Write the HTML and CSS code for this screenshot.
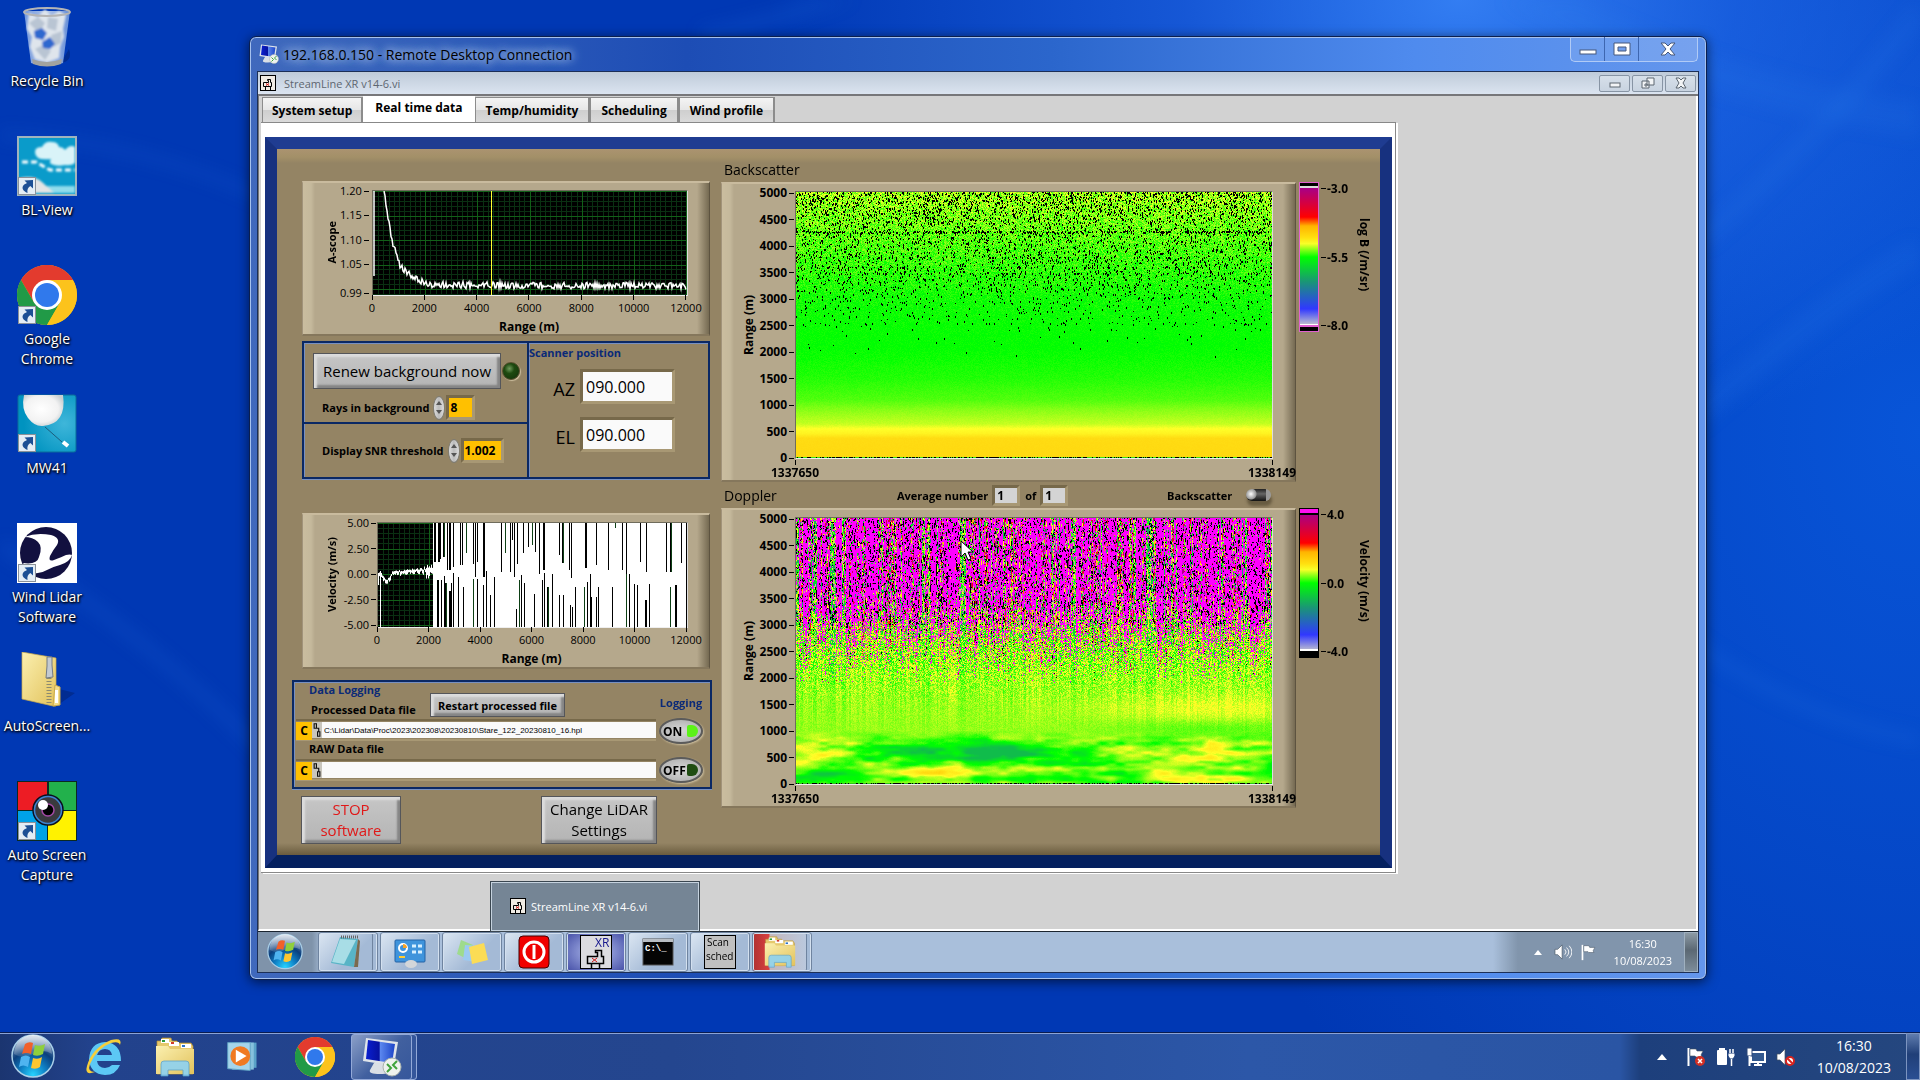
FILE: index.html
```
<!DOCTYPE html>
<html lang="en">
<head>
    <meta charset="UTF-8">
    <meta name="viewport" content="width=device-width, initial-scale=1.0">
    <title>192.168.0.150 - Remote Desktop Connection</title>
    <link rel="stylesheet" href="styles.css">
</head>
<body>
    <!-- Shared icons -->
    <svg class="defs" width="0" height="0">
        <defs>
            <radialGradient id="orbBlue" cx="50%" cy="95%" r="90%">
                <stop offset="0" stop-color="#27d3ff"/><stop offset=".35" stop-color="#0e7fc4"/><stop offset=".65" stop-color="#0b3f7d"/><stop offset="1" stop-color="#7b96b8"/>
            </radialGradient>
            <linearGradient id="gloss" x1="0" y1="0" x2="0" y2="1">
                <stop offset="0" stop-color="#fff" stop-opacity=".75"/><stop offset="1" stop-color="#fff" stop-opacity=".1"/>
            </linearGradient>
            <linearGradient id="folder" x1="0" y1="0" x2="1" y2="1">
                <stop offset="0" stop-color="#fbf0b0"/><stop offset="1" stop-color="#e2c25c"/>
            </linearGradient>
            <linearGradient id="screen" x1="0" y1="0" x2="1" y2="0">
                <stop offset="0" stop-color="#0a1fd0"/><stop offset=".45" stop-color="#0712a0"/><stop offset=".5" stop-color="#5a86ee"/><stop offset="1" stop-color="#1c44c8"/>
            </linearGradient>
            <linearGradient id="bin" x1="0" y1="0" x2="1" y2="0">
                <stop offset="0" stop-color="#8fb0e8"/><stop offset=".5" stop-color="#dde7f4"/><stop offset="1" stop-color="#7aa0e0"/>
            </linearGradient>
            <radialGradient id="balloon" cx="45%" cy="45%" r="60%">
                <stop offset="0" stop-color="#fff"/><stop offset=".7" stop-color="#f2f2f2"/><stop offset="1" stop-color="#c9cfd2"/>
            </radialGradient>
            <radialGradient id="sky" cx="80%" cy="50%" r="70%">
                <stop offset="0" stop-color="#3fb6da"/><stop offset="1" stop-color="#0093c0"/>
            </radialGradient>
            <filter id="soft"><feGaussianBlur stdDeviation=".8"/></filter>
        </defs>
        <symbol id="shortcut" viewBox="0 0 18 18">
            <rect x=".5" y=".5" width="17" height="17" fill="#e4edf5" stroke="#8b9199"/>
            <path d="M6.500 3.500 15 3v8.500l-2.700-2.400C10 10.500 9 12.500 9.500 16 5 14 3.500 11 5.300 8.500 6.500 7 8 6.700 9 6z" fill="#1d4f94"/>
        </symbol>
        <symbol id="chrome" viewBox="0 0 60 60">
            <circle cx="30" cy="30" r="30" fill="#fbc116"/>
            <path d="M4 15A30 30 0 0 1 56 15H30L17 37.500z" fill="#e33b2e"/>
            <path d="M4 15A30 30 0 0 0 30 60L43 37.500H17z" fill="#219a47"/>
            <path d="M30 15H56A30 30 0 0 1 30 60L43 37.500z" fill="#fcc31c"/>
            <circle cx="30" cy="30" r="15" fill="#fff"/><circle cx="30" cy="30" r="12" fill="#3079ec"/>
        </symbol>
        <symbol id="orb" viewBox="0 0 44 44">
            <circle cx="22" cy="22" r="21" fill="url(#orbBlue)" stroke="#a9cfe8" stroke-width="1.500"/>
            <path d="M3 20A19 19 0 0 1 41 20Q32 14 22 20T3 20z" fill="url(#gloss)"/>
            <path d="M14 10q4-3 8-1l-2 11q-5-2-9 0z" fill="#f2602a"/>
            <path d="M24 11q5 2 10-1l-2 10q-5 3-10 1z" fill="#8fcf3c"/>
            <path d="M10 23q5-3 9 0l-2 10q-5-3-9 0z" fill="#4fb4f0"/>
            <path d="M22 24q5 2 9-1l-2 10q-4 3-9 1z" fill="#fdc62f"/>
        </symbol>
        <symbol id="explorer" viewBox="0 0 40 40">
            <path d="M2 4h4l1-3h9l1 3h5l1 2h13l2 3v28H2z" fill="#e6c96d" stroke="#b58f38" stroke-width=".7"/>
            <rect x="6" y="2" width="8" height="4" fill="#fff"/><rect x="7" y="3" width="3" height="2" fill="#2c9c3a"/>
            <rect x="14" y="5" width="10" height="4" fill="#fff"/><rect x="16" y="5" width="3" height="2" fill="#d23a2a"/>
            <rect x="26" y="7" width="10" height="4" fill="#fff"/><rect x="27" y="8" width="3" height="2" fill="#2a72c9"/>
            <path d="M1 9h12l2 3h24v25H1z" fill="url(#folder)"/>
            <path d="M6 39V27q0-3 3-3h22q3 0 3 3v12h-6v-6H13v6z" fill="#8fd2f0" stroke="#559fca" stroke-width=".8" opacity=".92"/>
        </symbol>
        <symbol id="rdp" viewBox="0 0 40 40">
            <path d="M4 1 36 5 32 29 1 24z" fill="#dfe4ea"/>
            <path d="M6 3 33 7 30 26 4 22z" fill="url(#screen)"/>
            <path d="M12 26h12l2 6q4 5-8 5T8 33z" fill="#dadfe5"/>
            <circle cx="30" cy="30" r="9" fill="#eef2ee" stroke="#aab3ad"/>
            <path d="M25 27l4 4-4 4M35 24l-4 4 4 4" fill="none" stroke="#3fa33b" stroke-width="2"/>
        </symbol>
        <symbol id="vi" viewBox="0 0 16 16">
            <rect x=".5" y=".5" width="15" height="15" fill="#f1ece4" stroke="#000"/>
            <path d="M3.500 11.500v-4h5v-2h-1v-1h3v3h1v4zM5.500 12v3M10.500 12v3" fill="none" stroke="#000"/>
            <path d="M6 8.500l3 2m0-2l-3 2" stroke="#d01818"/>
        </symbol>
        <symbol id="flag" viewBox="0 0 18 20">
            <path d="M2.500 1v18" stroke="#fff" stroke-width="2"/>
            <path d="M4 2h6l1 2h6l-2 4 1 2h-6l-1-1H4z" fill="#fff" stroke="#42505f" stroke-width=".6"/>
        </symbol>
        <symbol id="speaker" viewBox="0 0 18 18">
            <path d="M1 6h3l5-5v16l-5-5H1z" fill="#fff" stroke="#42505f" stroke-width=".7"/>
        </symbol>
        <symbol id="pathicon" viewBox="0 0 8 14">
            <path d="M1.500 1.500h2v4h-2zM4.500 8.500h2v4h-2zM3.500 5.500h2v3" fill="none" stroke="#111"/>
        </symbol>
    </svg>

    <div class="desktop">
        <svg class="wallpaper" viewBox="0 0 1920 1080" preserveAspectRatio="none">
            <g fill="none" stroke="#2f80ee" stroke-opacity=".12">
                <path d="M0 135Q150 140 300 215" stroke-width="10"/>
                <path d="M0 545Q160 640 310 800" stroke-width="14"/>
                <path d="M700 36Q780 20 860-10" stroke-width="16"/>
                <path d="M1500-20Q1700 90 1920 120" stroke-width="34"/>
                <path d="M1700 240Q1830 130 1920 10" stroke-width="20"/>
                <path d="M1690 420Q1830 300 1920 250" stroke-width="26"/>
                <path d="M1690 640Q1800 720 1920 740" stroke-width="14"/>
            </g>
        </svg>

        <nav class="shortcuts">
            <a class="shortcut" href="#">
                <svg class="shortcut-icon" viewBox="0 0 60 60">
                    <path d="M44 56q12-2 8-14" fill="#02206e" opacity=".5"/>
                    <path d="M7 4H53L46 56Q30 62 14 56z" fill="url(#bin)" opacity=".8"/>
                    <g filter="url(#soft)">
                        <path d="M12 6l9 4 7-8 6 7 8-5 7 4-3 14 1 8-4 10-1 11-12 4-12-3-5-12 2-10-5-8z" fill="#dfe5ec"/>
                        <path d="M12 16l9-6 7 6-6 10zM31 10l10 2-2 12-9-3zM34 28l11-4-1 12-8 4zM18 42l8-4 8 6-6 9z" fill="#b9c5d3"/>
                        <path d="M17 24l8-3 5 5-4 7-8-2zM25 35l8-5 5 7-5 5-7-1z" fill="#2f68cf"/>
                    </g>
                    <ellipse cx="30" cy="5" rx="23" ry="4" fill="none" stroke="#b5b5b5" stroke-width="2"/>
                    <path d="M15 52q15 6 30 0l-1 5q-14 5-28 0z" fill="#a3a39f"/>
                </svg>
                <span>Recycle Bin</span>
            </a>
            <a class="shortcut" href="#">
                <svg class="shortcut-icon" viewBox="0 0 60 60">
                    <rect width="60" height="60" fill="#9fb4be"/><rect x="2" y="2" width="56" height="56" fill="#0a9bca"/>
                    <g filter="url(#soft)">
                        <path d="M18 16q0-5 7-5 3-6 10-5 6 0 7 5 4 0 6 3 5-6 10-3v16q-4 3-10 2-8 2-14-1-2-2 0-5-16 2-16-7z" fill="#d9f3f8"/>
                        <path d="M5 26h14l14 8h25" fill="none" stroke="#fff" stroke-width="3" stroke-dasharray="6 3"/>
                        <path d="M22 50h36v7H22z" fill="#8fdcec"/><path d="M3 42q14-3 22 4l12 11H3z" fill="#e4e4e4"/>
                    </g>
                    <use href="#shortcut" x="1" y="41" width="18" height="18"/>
                </svg>
                <span>BL-View</span>
            </a>
            <a class="shortcut" href="#">
                <svg class="shortcut-icon" viewBox="0 0 60 60">
                    <use href="#chrome" width="60" height="60"/><use href="#shortcut" x="1" y="41" width="18" height="18"/>
                </svg>
                <span>Google Chrome</span>
            </a>
            <a class="shortcut" href="#">
                <svg class="shortcut-icon" viewBox="0 0 60 60">
                    <rect x="1" y="1" width="58" height="57" rx="2" fill="url(#sky)" stroke="#0a6c9a"/>
                    <path d="M7 1Q4 15 11 24t15 8q12-1 17-9T46 1z" fill="url(#balloon)"/>
                    <path d="M28 33l17 15" stroke="#1c5d7c" fill="none"/><path d="M46 48l5 4" stroke="#fff" stroke-width="4"/>
                    <use href="#shortcut" x="1" y="40" width="18" height="18"/>
                </svg>
                <span>MW41</span>
            </a>
            <a class="shortcut" href="#">
                <svg class="shortcut-icon" viewBox="0 0 60 60">
                    <rect width="60" height="60" fill="#fff"/>
                    <ellipse cx="29" cy="30" rx="26" ry="26" fill="#12103f"/>
                    <path d="M7 14Q20 9 34 12q10 3 6 10-4 5-7 11-2 6 4 4 8-3 12-5 4-1 6 0-2 7-12 10-8 2-13 5-8 5-17 2L6 40q14 2 16-6 4-10-1-15Q16 14 7 14z" fill="#fff"/>
                    <use href="#shortcut" x="1" y="41" width="18" height="18"/>
                </svg>
                <span>Wind Lidar Software</span>
            </a>
            <a class="shortcut" href="#">
                <svg class="shortcut-icon" viewBox="0 0 60 60">
                    <path d="M38 55l20-14-16-4z" fill="#02206e" opacity=".5"/>
                    <path d="M5 0 39 6V54L36 54 5 47z" fill="url(#folder)" stroke="#c9a94a" stroke-width=".7"/>
                    <path d="M38 33l5 2v18l-7 1z" fill="#f1dc8c" stroke="#c9a94a"/><rect x="38" y="38" width="3" height="13" fill="#fff"/>
                    <path d="M32 26v27" stroke="#8c8a70" stroke-width="5" stroke-dasharray="1 2"/>
                    <path d="M30 5h5v8l1 12-7 1 1-12z" fill="#c3cad1" stroke="#737b84"/>
                </svg>
                <span>AutoScreen...</span>
            </a>
            <a class="shortcut" href="#">
                <svg class="shortcut-icon" viewBox="0 0 60 60">
                    <rect width="60" height="60" fill="#0b2a22"/>
                    <rect x="1" y="1" width="29" height="28" fill="#ed1c24"/><rect x="32" y="1" width="27" height="28" fill="#22b14c"/>
                    <rect x="1" y="30" width="29" height="29" fill="#00a2e8"/><rect x="31" y="30" width="28" height="29" fill="#fff200"/>
                    <circle cx="31" cy="29" r="15" fill="#3a3a3e" stroke="#0a0f20" stroke-width="1.500"/><circle cx="31" cy="29" r="13.500" fill="none" stroke="#3b83d0" stroke-width="1.500"/>
                    <circle cx="31" cy="29" r="6" fill="#000" stroke="#a349a4" stroke-width="1.500"/><circle cx="26" cy="24" r="5" fill="#fff"/>
                    <use href="#shortcut" x="1" y="41" width="18" height="18"/>
                </svg>
                <span>Auto Screen Capture</span>
            </a>
        </nav>

        <!-- Remote desktop window -->
        <section class="rdp">
            <header class="rdp-title">
                <svg class="rdp-icon"><use href="#rdp"/></svg>
                <h1>192.168.0.150 - Remote Desktop Connection</h1>
                <div class="rdp-buttons">
                    <button aria-label="Minimise"><svg width="18" height="14"><rect x="1" y="8" width="16" height="4" fill="#fff" stroke="#46587c"/></svg></button>
                    <button aria-label="Maximise"><svg width="18" height="14"><path d="M1 1h16v12H1zM5 5v4h8V5z" fill="#fff" fill-rule="evenodd" stroke="#46587c"/></svg></button>
                    <button aria-label="Close" class="wide"><svg width="18" height="14"><path d="M2 1h4l3 3 3-3h4l-5 6 5 6h-4l-3-3-3 3H2l5-6z" fill="#fff" stroke="#46587c"/></svg></button>
                </div>
            </header>

            <div class="session">
                <div class="vi-title">
                    <svg class="vi-icon"><use href="#vi"/></svg>
                    <h2>StreamLine XR v14-6.vi</h2>
                    <div class="vi-buttons">
                        <button aria-label="Minimise"><svg width="14" height="12"><rect x="2" y="6" width="10" height="4" fill="#f2f4f6" stroke="#5c6670"/></svg></button>
                        <button aria-label="Restore"><svg width="14" height="12"><path d="M6 1h7v7H6zM1 4h7v7H1zM4 7h2v2H4z" fill="#f2f4f6" stroke="#5c6670"/></svg></button>
                        <button aria-label="Close"><svg width="14" height="12"><path d="M2 1h3l2 2 2-2h3L9 6l3 5H9L7 9l-2 2H2l3-5z" fill="#f2f4f6" stroke="#5c6670"/></svg></button>
                    </div>
                </div>

                <main class="vi-body">
                    <div class="tabs" role="tablist">
                        <button role="tab">System setup</button>
                        <button role="tab" class="active" aria-selected="true">Real time data</button>
                        <button role="tab">Temp/humidity</button>
                        <button role="tab">Scheduling</button>
                        <button role="tab">Wind profile</button>
                    </div>

                    <div class="page">
                        <div class="board">
                            <div class="left">
                                <div class="panel scope">
                                    <div class="side-label"><span>A-scope</span></div>
                                    <ul class="yticks ascope-ticks"><li>1.20</li><li>1.15</li><li>1.10</li><li>1.05</li><li>0.99</li></ul>
                                    <canvas id="ascope" width="314" height="104"></canvas>
                                    <ul class="xticks"><li>0</li><li>2000</li><li>4000</li><li>6000</li><li>8000</li><li>10000</li><li>12000</li></ul>
                                    <p class="xlabel">Range (m)</p>
                                </div>

                                <div class="settings">
                                    <div class="cell renew">
                                        <div class="row">
                                            <button class="metal renew-btn">Renew background now</button>
                                            <span class="led"></span>
                                        </div>
                                        <div class="row field-row">
                                            <label for="rays">Rays in background</label>
                                            <span class="stepper"></span>
                                            <input id="rays" class="amber rays" type="text" value="8">
                                        </div>
                                    </div>
                                    <div class="cell snr">
                                        <div class="row field-row">
                                            <label for="snr">Display SNR threshold</label>
                                            <span class="stepper"></span>
                                            <input id="snr" class="amber snr-input" type="text" value="1.002">
                                        </div>
                                    </div>
                                    <div class="cell scanner">
                                        <h3>Scanner position</h3>
                                        <div class="angle"><label for="az">AZ</label><input id="az" type="text" value="090.000"></div>
                                        <div class="angle"><label for="el">EL</label><input id="el" type="text" value="090.000"></div>
                                    </div>
                                </div>

                                <div class="panel scope velocity">
                                    <div class="side-label"><span>Velocity (m/s)</span></div>
                                    <ul class="yticks"><li>5.00</li><li>2.50</li><li>0.00</li><li>-2.50</li><li>-5.00</li></ul>
                                    <canvas id="velocity" width="309" height="104"></canvas>
                                    <ul class="xticks"><li>0</li><li>2000</li><li>4000</li><li>6000</li><li>8000</li><li>10000</li><li>12000</li></ul>
                                    <p class="xlabel">Range (m)</p>
                                </div>

                                <div class="logging">
                                    <div class="log-files">
                                        <h3>Data Logging</h3>
                                        <div class="log-head">
                                            <label for="processed">Processed Data file</label>
                                            <button class="metal restart">Restart processed file</button>
                                        </div>
                                        <div class="path">
                                            <span class="drive">C</span><svg><use href="#pathicon"/></svg>
                                            <input id="processed" type="text" value="C:\Lidar\Data\Proc\2023\202308\20230810\Stare_122_20230810_16.hpl">
                                        </div>
                                        <label class="raw-label" for="raw">RAW Data file</label>
                                        <div class="path">
                                            <span class="drive">C</span><svg><use href="#pathicon"/></svg>
                                            <input id="raw" type="text" value="">
                                        </div>
                                    </div>
                                    <div class="log-switches">
                                        <h3>Logging</h3>
                                        <button class="switch on">ON</button>
                                        <button class="switch">OFF</button>
                                    </div>
                                </div>

                                <div class="actions">
                                    <button class="metal stop">STOP software</button>
                                    <button class="metal change">Change LiDAR Settings</button>
                                </div>
                            </div>

                            <div class="right">
                                <div class="bar-head"><h3>Backscatter</h3></div>
                                <div class="map-row">
                                    <div class="panel map">
                                        <div class="side-label"><span>Range (m)</span></div>
                                        <ul class="yticks"><li>5000</li><li>4500</li><li>4000</li><li>3500</li><li>3000</li><li>2500</li><li>2000</li><li>1500</li><li>1000</li><li>500</li><li>0</li></ul>
                                        <canvas id="backscatter" width="476" height="266"></canvas>
                                        <ul class="xticks"><li>1337650</li><li>1338149</li></ul>
                                    </div>
                                    <div class="scale beta"></div>
                                    <ul class="scale-ticks"><li>-3.0</li><li>-5.5</li><li>-8.0</li></ul>
                                    <div class="scale-label"><span>log B (/m/sr)</span></div>
                                </div>

                                <div class="bar-head">
                                    <h3>Doppler</h3>
                                    <div class="average">
                                        <label for="avg">Average number</label><input id="avg" type="text" value="1">
                                        <label for="avg-of">of</label><input id="avg-of" type="text" value="1">
                                    </div>
                                    <label for="mode">Backscatter</label>
                                    <input id="mode" class="toggle" type="checkbox">
                                </div>
                                <div class="map-row">
                                    <div class="panel map">
                                        <div class="side-label"><span>Range (m)</span></div>
                                        <ul class="yticks"><li>5000</li><li>4500</li><li>4000</li><li>3500</li><li>3000</li><li>2500</li><li>2000</li><li>1500</li><li>1000</li><li>500</li><li>0</li></ul>
                                        <canvas id="doppler" width="476" height="266"></canvas>
                                        <ul class="xticks"><li>1337650</li><li>1338149</li></ul>
                                        <svg class="cursor" width="14" height="22"><path d="M1 1v16l4-4 3 7 3-1-3-7h5z" fill="#fff" stroke="#000"/></svg>
                                    </div>
                                    <div class="scale speed"></div>
                                    <ul class="scale-ticks"><li>4.0</li><li>0.0</li><li>-4.0</li></ul>
                                    <div class="scale-label"><span>Velocity (m/s)</span></div>
                                </div>
                            </div>
                        </div>
                    </div>
                </main>

                <div class="inner-taskbar">
                    <button class="start" aria-label="Start"><svg><use href="#orb"/></svg></button>
                    <button class="task stacked" aria-label="Notepad"><svg viewBox="0 0 32 34"><path d="M10 2 28 4 24 32 1 28z" fill="#58b4c6"/><path d="M10 4 26 5 14 29 2 27z" fill="#a8dde6"/><path d="M28 4l2 2-2 26-4 0z" fill="#7b6a4e"/><path d="M11 2h17" stroke="#666" stroke-width="3" stroke-dasharray="1 1"/></svg></button>
                    <button class="task" aria-label="Control Panel"><svg viewBox="0 0 32 34"><rect x="1" y="5" width="30" height="22" rx="1" fill="#3f94dc" stroke="#2563a5"/><circle cx="9" cy="13" r="4" fill="none" stroke="#fff" stroke-width="2"/><path d="M9 13V9a4 4 0 0 1 4 4z" fill="#f6a328"/><path d="M18 11h4m2 0h4M18 17h4m2 0h4" stroke="#d5efff" stroke-width="3"/><path d="M5 22h6" stroke="#fc3" stroke-width="2"/><ellipse cx="17" cy="29" rx="6" ry="4" fill="#d3d6d9"/></svg></button>
                    <button class="task" aria-label="Sticky Notes"><svg viewBox="0 0 32 34"><path d="M5 5l12 5-6 14-10-5z" fill="#9edb8d"/><path d="M9 10l14 1-2 16-14-2z" fill="#9ccaf2"/><path d="M13 12l15-4 4 17-16 4z" fill="#fbdc55"/></svg></button>
                    <button class="task" aria-label="Scheduler"><svg viewBox="0 0 32 34"><rect x="1" y="1" width="30" height="32" rx="4" fill="#f00000" stroke="#400"/><circle cx="16" cy="17" r="10" fill="none" stroke="#fff" stroke-width="3"/><path d="M16 10v14" stroke="#fff" stroke-width="3"/></svg></button>
                    <button class="task current" aria-label="StreamLine XR"><svg viewBox="0 0 32 34"><rect x=".5" y=".5" width="31" height="33" fill="#dcdce0" stroke="#000"/><text x="15" y="12" class="xr">XR</text><path d="M7.500 28.500v-7h10v-4h-2v-2h6v6h2v7zM11.500 29v5M19.500 29v5" fill="none" stroke="#000" stroke-width="1.500"/><path d="M12 23l5 4m0-4l-5 4" stroke="#d01818"/></svg></button>
                    <button class="task" aria-label="Command Prompt"><svg viewBox="0 0 32 34"><rect x="1" y="4" width="30" height="26" fill="#050505" stroke="#555"/><rect x="1" y="4" width="30" height="3" fill="#b9bec4"/><text x="3" y="16" class="cmd">C:\_</text></svg></button>
                    <button class="task" aria-label="Scan sched"><svg viewBox="0 0 32 34"><rect x=".5" y=".5" width="31" height="33" fill="#c0c0c0" stroke="#000"/><text x="3" y="11" class="sched">Scan</text><text x="2" y="25" class="sched">sched</text></svg></button>
                    <button class="task stacked alert" aria-label="Explorer"><svg><use href="#explorer"/></svg></button>
                    <div class="tray">
                        <svg class="up" width="8" height="5"><path d="M0 5 4 0l4 5z" fill="#fff"/></svg>
                        <svg width="18" height="16" viewBox="0 0 20 18"><use href="#speaker" width="18" height="18"/><path d="M12 6q3 3 0 6M14 4q5 5 0 10M17 2q6 7 0 14" fill="none" stroke="#fff"/></svg>
                        <svg width="16" height="17"><use href="#flag"/></svg>
                        <time>16:30<br>10/08/2023</time>
                        <button class="peek" aria-label="Show desktop"></button>
                    </div>
                    <div class="preview"><svg class="vi-icon"><use href="#vi"/></svg><span>StreamLine XR v14-6.vi</span></div>
                </div>
            </div>
        </section>

        <footer class="taskbar">
            <button class="start" aria-label="Start"><svg><use href="#orb"/></svg></button>
            <button class="launch" aria-label="Internet Explorer">
                <svg viewBox="0 0 40 40"><path d="M37 24H13q1 7 8 7 4 0 7-3h8q-4 10-15 10Q6 37 5 22 6 6 21 5q16 1 16 19zM28 18q-1-6-7-6t-8 6z" fill="#5cc8f5" fill-rule="evenodd"/><path d="M36 8Q39 0 27 3 8 11 3 29q-3 10 8 6-8 0-5-8Q13 11 27 6q8-2 9 2z" fill="#f7cf3a"/></svg>
            </button>
            <button class="launch" aria-label="Explorer"><svg><use href="#explorer"/></svg></button>
            <button class="launch media" aria-label="Media Player">
                <svg viewBox="0 0 40 40"><path d="M12 4h23v28H12z" fill="#5aa2c8"/><path d="M8 4h24v30H8z" fill="#86c1dd"/><path d="M3 4h25v31l-25-2z" fill="#a5d5ea" stroke="#5b9fc2"/><circle cx="17" cy="19" r="11" fill="#f07a22"/><path d="M12 12l12 7-12 7z" fill="#fff"/></svg>
            </button>
            <button class="launch" aria-label="Chrome"><svg viewBox="0 0 60 60"><use href="#chrome"/></svg></button>
            <button class="launch running" aria-label="Remote Desktop"><svg><use href="#rdp"/></svg></button>
            <div class="tray">
                <svg class="up" width="10" height="6"><path d="M0 6 5 0l5 6z" fill="#fff"/></svg>
                <svg width="20" height="20"><use href="#flag" width="18" height="20"/><circle cx="14" cy="14" r="5" fill="#d22f24"/><path d="M12 12l4 4m0-4l-4 4" stroke="#fff" stroke-width="1.500"/></svg>
                <svg width="20" height="20"><rect x="1" y="3" width="10" height="15" rx="1" fill="#fff"/><rect x="3" y="1" width="6" height="2" fill="#fff"/><path d="M12 6h7v3l-2 3h-3l-2-3z" fill="#fff" stroke="#1d3f7c"/><path d="M14 2v4M17 2v4M15.500 12v7" stroke="#fff" stroke-width="1.500"/></svg>
                <svg width="20" height="20"><rect x="5" y="5" width="14" height="10" fill="#33598f" stroke="#fff" stroke-width="2"/><path d="M12 15v3M8 18h8" stroke="#fff" stroke-width="2"/><rect x="1" y="1" width="5" height="8" fill="#fff" stroke="#2b4679"/><path d="M3.500 9v10" stroke="#fff" stroke-width="2"/></svg>
                <svg width="20" height="20"><use href="#speaker" width="18" height="18" y="1"/><circle cx="14" cy="14" r="4" fill="#fff" stroke="#d8231e" stroke-width="2"/><path d="M11 11l6 6" stroke="#d8231e" stroke-width="2"/></svg>
                <time>16:30<br>10/08/2023</time>
                <button class="peek" aria-label="Show desktop"></button>
            </div>
        </footer>
    </div>

    <script src="plots.js"></script>
</body>
</html>
```
FILE: styles.css
```
* {
    box-sizing: border-box;
}
body {
    margin: 0;
    font-family: "Open Sans", "Noto Sans", sans-serif;
    font-size: 12px;
    color: #000;
}
h1, h2, h3, p, ul {
    margin: 0;
    padding: 0;
    font-weight: normal;
    list-style: none;
}
button, input {
    font-family: inherit;
    color: inherit;
    margin: 0;
    padding: 0;
    border: none;
    background: none;
}
.defs {
    position: absolute;
}

/* Desktop */
.desktop {
    position: relative;
    display: flex;
    flex-direction: column;
    justify-content: space-between;
    height: 100vh;
    overflow: hidden;
    background:
        radial-gradient(ellipse 36% 42% at 76% 0, rgba(56, 132, 248, 0.9), rgba(36, 108, 236, 0.6) 40%, transparent),
        radial-gradient(ellipse 40% 90% at 100% 40%, rgba(10, 92, 225, 0.8), transparent),
        #0038b4;
}
.wallpaper {
    position: absolute;
    width: 100%;
    height: 100%;
    filter: blur(8px);
}
.shortcuts {
    position: relative;
    display: flex;
    flex-direction: column;
    width: 94px;
    padding-top: 7px;
}
.shortcut {
    display: flex;
    flex-direction: column;
    align-items: center;
    gap: 4px;
    height: 129px;
    color: #fff;
    font-size: 14px;
    line-height: 20px;
    text-align: center;
    text-decoration: none;
    text-shadow: 1px 1px 2px #000, 0 1px 3px #000;
}
.shortcut-icon {
    width: 60px;
    height: 60px;
    flex: none;
}

/* Remote desktop window */
.rdp {
    position: absolute;
    left: 249px;
    right: 213px;
    top: 36px;
    bottom: 100px;
    display: flex;
    flex-direction: column;
    padding: 0 8px 7px;
    border: 1px solid #0b1f4e;
    border-radius: 7px;
    background: linear-gradient(90deg, #4069bd, #1d4db5 30%, #2b66cc 55%, #4f8bee 80%, #6496ec);
    box-shadow: inset 0 0 0 1px #a5c1ee, 0 2px 12px rgba(0, 0, 0, 0.6);
}
.rdp-title {
    display: flex;
    align-items: flex-start;
    height: 35px;
}
.rdp-icon {
    width: 20px;
    height: 20px;
    margin: 7px 4px 0 1px;
}
.rdp-title h1 {
    padding: 7px 8px 0 0;
    font-size: 14px;
    line-height: 22px;
    text-shadow: 0 0 8px #a9c0e8, 0 0 10px #a9c0e8, 0 0 14px #a9c0e8;
}
.rdp-buttons {
    display: flex;
    margin-left: auto;
    border: 1px solid #b1cbf6;
    border-top: none;
    border-radius: 0 0 5px 5px;
}
.rdp-buttons button {
    display: flex;
    align-items: center;
    justify-content: center;
    width: 34px;
    height: 24px;
    border-right: 1px solid #3d66b0;
    background: rgba(255, 255, 255, 0.12);
}
.rdp-buttons .wide {
    width: 58px;
    border-right: none;
}
.session {
    display: flex;
    flex-direction: column;
    flex: 1;
    min-height: 0;
    outline: 1px solid #1c2f57;
    background: #d2d2d2;
}
.vi-title {
    display: flex;
    align-items: center;
    height: 24px;
    padding: 0 2px;
    border-bottom: 2px solid #77777a;
    background: linear-gradient(#bfcbd9, #dbe4f0);
}
.vi-icon {
    width: 16px;
    height: 16px;
    flex: none;
}
.vi-title h2 {
    margin-left: 8px;
    color: #5d6670;
    font-size: 11px;
}
.vi-buttons {
    display: flex;
    gap: 2px;
    margin-left: auto;
}
.vi-buttons button {
    display: flex;
    align-items: center;
    justify-content: center;
    width: 31px;
    height: 17px;
    border: 1px solid #8794a4;
    border-radius: 2px;
    background: linear-gradient(#d6dfe9, #c8d3e0);
}
.vi-body {
    flex: 1;
    min-height: 0;
    padding-left: 2px;
    border-left: 1px solid #777;
    border-right: 2px solid #fff;
    border-bottom: 2px solid #fff;
}

/* Tabs */
.tabs {
    display: flex;
    align-items: flex-end;
    height: 26px;
    padding-left: 1px;
}
.tabs button {
    height: 25px;
    padding: 0 9px;
    border: 1px solid #8c8c8c;
    border-width: 1px 2px 0 1px;
    background: linear-gradient(#f4f4f4, #e6e6e6 50%, #cfcfcf 52%, #dadada);
    font-size: 12px;
    font-weight: bold;
}
.tabs .active {
    height: 26px;
    padding: 0 12px 3px;
    border: none;
    background: #fff;
}
.tabs .active ~ button {
    padding: 0 10px;
}
.page {
    width: 1135px;
    padding: 14px 3px 4px 4px;
    border: 1px solid #888;
    border-left: none;
    background: #fff;
    box-shadow: 2px 1px 0 #fff;
}
.board {
    display: flex;
    gap: 9px;
    border: 12px solid #17317f;
    border-top-color: #1f3c91;
    border-bottom: 13px solid #04205f;
    padding-left: 15px;
    background: linear-gradient(#ab9370, #a39068 8px, #948464 14px, #948464 calc(100% - 12px), #6a5b3e);
}

/* Left column */
.left {
    width: 420px;
    padding: 32px 0 11px;
}
.panel {
    border: 1px solid #a1937a;
    border-top: 2px solid #c9bb9e;
    border-right: 1px solid #5d5340;
    border-bottom: 2px solid #85775c;
    background: linear-gradient(90deg, #cabd9f, #c5b99c 8px, #b5a88c 12px, #b5a88c calc(100% - 12px), #756a52);
}
.scope {
    display: grid;
    grid-template-columns: 18px 32px 314px;
    grid-template-rows: 104px 26px 18px;
    height: 155px;
    margin-left: 10px;
    padding: 7px 0 0 19px;
    width: 408px;
}
.velocity {
    grid-template-columns: 18px 37px 309px;
    height: 156px;
    margin-top: 34px;
}
.side-label {
    display: flex;
    align-items: center;
    justify-content: center;
}
.side-label span {
    writing-mode: vertical-rl;
    transform: rotate(180deg);
    font-weight: bold;
    white-space: nowrap;
}
.scope .side-label {
    font-size: 11px;
}
.yticks {
    display: flex;
    flex-direction: column;
    justify-content: space-between;
    margin: -7px 1px -7px 0;
    font-size: 11px;
    line-height: 16px;
    text-align: right;
}
.yticks li {
    display: flex;
    align-items: center;
    justify-content: flex-end;
    gap: 2px;
    height: 16px;
}
.yticks li::after {
    content: "";
    width: 5px;
    height: 1px;
    background: #000;
}
.ascope-ticks {
    display: grid;
    grid-template-rows: 24px 25px 24px 29px 16px;
}
canvas {
    display: block;
    border: 1px solid #6f6c5c;
    border-right-color: #ddd;
    border-bottom-color: #eee;
}
.xticks {
    grid-column: 3;
    display: flex;
    justify-content: space-between;
    margin: 1px -20px 0;
    font-size: 11px;
    line-height: 16px;
    text-align: center;
}
.xticks li {
    width: 40px;
}
.xticks li::before {
    content: "";
    display: block;
    width: 1px;
    height: 5px;
    margin: 0 auto;
    background: #000;
}
.xlabel {
    grid-column: 3;
    line-height: 14px;
    text-align: center;
    font-size: 12px;
    font-weight: bold;
}

/* Settings box */
.settings {
    display: grid;
    grid-template-columns: 223px 1fr;
    grid-template-rows: 81px 53px;
    width: 408px;
    margin: 5px 0 0 10px;
    border: 2px solid #0a2864;
    box-shadow: inset 1px 1px 0 #7890c0, 0 1px 0 #7890c0;
    height: 138px;
}
.row {
    display: flex;
    align-items: center;
}
.renew {
    padding: 10px 0 0 9px;
    border-bottom: 2px solid #0a2864;
}
.snr {
    padding: 14px 0 0 18px;
}
.scanner {
    grid-column: 2;
    grid-row: 1 / 3;
    border-left: 2px solid #0a2864;
    box-shadow: inset 1px 1px 0 #7890c0;
}
.settings h3, .logging h3 {
    color: #0a2a78;
    font-size: 11px;
    font-weight: bold;
}
.scanner h3 {
    padding: 2px 0 0 0;
    line-height: 16px;
}
.metal {
    border: 1px solid #55565a;
    background: linear-gradient(#c6c6c6, #b4b4b4);
    box-shadow: inset 3px 3px 2px #dcdcdc, inset -3px -3px 2px #858585;
}
.renew-btn {
    width: 188px;
    height: 36px;
    font-size: 15px;
    white-space: nowrap;
}
.led {
    width: 18px;
    height: 18px;
    margin-left: 1px;
    border: 1px solid #57502f;
    border-radius: 50%;
    background: radial-gradient(circle at 40% 35%, #6f9a5c, #1e4a10 35%, #12300a);
    box-shadow: 1px 1px 1px #cdbf9f;
}
.field-row label {
    font-weight: bold;
    font-size: 11px;
    white-space: nowrap;
}
.renew .field-row {
    margin: 6px 0 0 9px;
}
.stepper {
    width: 12px;
    height: 24px;
    margin: 0 1px 0 4px;
    border: 1px solid #7f7c72;
    border-radius: 50%;
    background: linear-gradient(90deg, #ddd, #bbb 48%, #ddd);
    position: relative;
}
.stepper::before, .stepper::after {
    content: "";
    position: absolute;
    left: 2px;
    top: 4px;
    border: 3px solid transparent;
    border-top: none;
    border-bottom: 4px solid #555;
}
.stepper::after {
    top: 13px;
    border-top: 4px solid #555;
    border-bottom: none;
}
.amber, .angle input, .average input {
    border: 3px solid;
    border-color: #77694a #a89874 #a89874 #77694a;
    background: #ffc000;
    font-weight: bold;
    font-size: 12px;
}
.amber {
    height: 25px;
    padding-left: 1px;
}
.rays {
    width: 29px;
}
.snr-input {
    width: 43px;
}
.angle {
    display: flex;
    align-items: center;
    justify-content: flex-end;
    gap: 5px;
    height: 35px;
    margin: 8px 33px 0 0;
}
.angle + .angle {
    margin-top: 13px;
}
.angle label {
    font-size: 18px;
    padding-top: 4px;
}
.angle input {
    width: 95px;
    height: 35px;
    padding-left: 3px;
    background: #fafafa;
    font-size: 16px;
    font-weight: normal;
}

/* Data logging */
.logging {
    display: flex;
    justify-content: space-between;
    height: 109px;
    margin-top: 11px;
    border: 2px solid #0a2864;
    box-shadow: inset 1px 1px 0 #7890c0, 0 1px 0 #7890c0;
    padding-right: 7px;
}
.log-files {
    width: 362px;
    padding-left: 2px;
}
.log-files h3 {
    padding-left: 13px;
    line-height: 16px;
    height: 12px;
}
.log-head {
    display: flex;
    align-items: center;
    justify-content: space-between;
    height: 25px;
    padding: 0 91px 0 15px;
    font-size: 11px;
    font-weight: bold;
}
.log-head label {
    padding-top: 6px;
}
.restart {
    width: 135px;
    height: 24px;
    margin-top: -3px;
    font-size: 11px;
    font-weight: bold;
    white-space: nowrap;
}
.path {
    display: flex;
    height: 22px;
    padding-top: 1px;
    border-top: 2px solid #77694a;
    border-bottom: 2px solid #a89874;
}
.drive {
    width: 16px;
    height: 18px;
    flex: none;
    background: #ffc000;
    font-weight: bold;
    line-height: 18px;
    text-align: center;
}
.path svg {
    width: 10px;
    height: 16px;
    flex: none;
    background: #c9c6bd;
}
.path input {
    flex: 1;
    height: 16px;
    padding-left: 2px;
    background: #fafafa;
    font-family: "Liberation Sans", sans-serif;
    font-size: 8px;
}
.raw-label {
    display: block;
    height: 18px;
    padding-left: 13px;
    font-size: 11px;
    font-weight: bold;
    line-height: 16px;
}
.log-switches {
    display: flex;
    flex-direction: column;
    align-items: center;
    width: 44px;
    padding-top: 13px;
}
.log-switches h3 {
    height: 23px;
    line-height: 16px;
}
.switch {
    display: flex;
    flex: none;
    align-items: center;
    justify-content: space-between;
    width: 44px;
    height: 26px;
    margin-bottom: 13px;
    padding: 0 3px 0 2px;
    border: 2px solid #5b5b5b;
    border-radius: 50%;
    background: radial-gradient(#d8d8d8, #a9a9a9);
    box-shadow: 1px 1px 2px #cdbf9f;
    font-size: 12px;
    font-weight: bold;
}
.switch:last-child {
    margin-bottom: 0;
}
.switch::after {
    content: "";
    width: 11px;
    height: 12px;
    border-radius: 2px 6px 6px 2px;
    background: #1f4d12;
}
.switch.on::after {
    background: #5cf218;
}
.actions {
    display: flex;
    justify-content: space-between;
    margin: 7px 55px 0 9px;
}
.actions button {
    width: 116px;
    height: 48px;
    font-size: 15px;
    line-height: 21px;
}
.actions .stop {
    width: 100px;
    color: #e01818;
}

/* Right column */
.right {
    flex: 1;
    padding-top: 9px;
}
.bar-head {
    display: flex;
    align-items: center;
    height: 24px;
    padding: 0 0 2px 3px;
    font-size: 11px;
    font-weight: bold;
    white-space: nowrap;
}
.bar-head h3 {
    width: 173px;
    font-size: 14px;
}
.map-row + .bar-head {
    height: 26px;
    padding-bottom: 0;
}
.average {
    display: flex;
    align-items: center;
    gap: 4px;
    width: 270px;
}
.average input {
    width: 28px;
    height: 21px;
    margin-right: 1px;
    padding-left: 2px;
    background: #d4d4d4;
}
.toggle {
    appearance: none;
    width: 25px;
    height: 12px;
    margin-left: 14px;
    border-radius: 6px;
    background: radial-gradient(circle at 5px 5px, #fff, #999 5px, transparent 6px), linear-gradient(90deg, transparent 20px, #999 20px), linear-gradient(#222, #666 40%, #111);
    box-shadow: 1px 5px 3px rgba(60, 50, 30, 0.5);
}
.map-row {
    display: flex;
    height: 300px;
}
.map {
    position: relative;
    display: grid;
    grid-template-columns: 18px 38px 478px;
    grid-template-rows: 268px 24px;
    width: 575px;
    padding: 7px 0 0 17px;
}
.map .yticks {
    margin: -6px 1px -7px 0;
    font-size: 12px;
    font-weight: bold;
}
.map .xticks {
    margin: 1px -28px 0 -29px;
    font-size: 12px;
    font-weight: bold;
}
.map .xticks li {
    width: 58px;
}
.cursor {
    position: absolute;
    left: 238px;
    top: 30px;
}
.scale {
    width: 20px;
    height: 150px;
    margin-left: 3px;
    border: 1px solid #e060d0;
    background:
        linear-gradient(#000 3px, #ddd 3px, #ddd 5px, transparent 5px),
        linear-gradient(transparent calc(100% - 7px), #fff calc(100% - 7px), #fff calc(100% - 6px), #e060d0 calc(100% - 6px), #e060d0 calc(100% - 4px), #000 calc(100% - 4px)),
        linear-gradient(#98009f, #f00 23%, #ffb400 29%, #ffe010 37%, #f8ff28 41%, #0f0 50%, #1a9478 67%, #3038ff 85%, #c4c4cc 96%);
}
.speed {
    border-color: #000;
    background:
        linear-gradient(#ff10f0 4px, #000 4px, #000 6px, transparent 6px),
        linear-gradient(transparent calc(100% - 8px), #fff calc(100% - 8px), #fff calc(100% - 6px), #000 calc(100% - 6px)),
        linear-gradient(#98009f, #f00 23%, #ffb400 29%, #ffe010 37%, #f8ff28 41%, #0f0 50%, #1a9478 67%, #3038ff 85%, #c4c4cc 96%);
}
.scale-ticks {
    display: flex;
    flex-direction: column;
    justify-content: space-between;
    width: 36px;
    height: 151px;
    margin-left: 2px;
    font-weight: bold;
    line-height: 14px;
}
.scale-ticks li::before {
    content: "";
    display: inline-block;
    width: 5px;
    height: 1px;
    margin-right: 1px;
    vertical-align: 4px;
    background: #000;
}
.scale-label {
    display: flex;
    align-items: center;
    height: 146px;
    writing-mode: vertical-rl;
}
.scale-label span {
    width: 16px;
    height: 146px;
    text-align: center;
    font-weight: bold;
}

/* Remote taskbar */
.inner-taskbar {
    position: relative;
    display: flex;
    gap: 2px;
    height: 41px;
    border-top: 1px solid #1b2530;
    background: linear-gradient(90deg, #7f93aa 54px, #a9bfdb 66px, #a9bfdb calc(100% - 205px), #8195ac calc(100% - 180px));
}
.inner-taskbar .start {
    width: 58px;
}
.inner-taskbar .start svg {
    width: 36px;
    height: 37px;
    margin: 1px 0 0 -4px;
}
.task {
    display: flex;
    align-items: center;
    justify-content: center;
    width: 60px;
    border: 1px solid #6f84a0;
    border-radius: 3px;
    background: linear-gradient(135deg, #dbe6f2, #a4bad6 60%);
    box-shadow: inset 0 0 0 1px #d3e0ef;
}
.task svg {
    width: 32px;
    height: 34px;
}
.stacked {
    padding-right: 4px;
    box-shadow: inset 0 0 0 1px #d3e0ef, inset -4px 0 0 #a4bad6, inset -5px 0 0 #6f84a0;
}
.current {
    background: radial-gradient(#b7c3ee, #7d88cc 50%, #444ea6);
}
.alert {
    background: linear-gradient(90deg, #b03232, #d84040 16px, #c3b7bd 17px, #b9cbe2);
}
.xr {
    fill: #14148c;
    font-size: 12px;
}
.cmd {
    fill: #fff;
    font-family: "Liberation Mono", monospace;
    font-size: 9px;
    font-weight: bold;
}
.sched {
    font-size: 10px;
}
.tray {
    display: flex;
    align-items: center;
    margin-left: auto;
    color: #fff;
    text-align: center;
}
.inner-taskbar .tray {
    gap: 8px;
    font-size: 11px;
    line-height: 17px;
}
.inner-taskbar time {
    padding: 0 4px 0 10px;
}
.inner-taskbar .up {
    margin-right: 4px;
}
.peek {
    width: 14px;
    height: 100%;
    border: 1px solid #9fb0bf;
    background: linear-gradient(#8c9aa5, #5b6873 45%, #7c8c9a);
}
.preview {
    position: absolute;
    left: 232px;
    bottom: 40px;
    display: flex;
    align-items: center;
    gap: 5px;
    width: 210px;
    height: 51px;
    padding: 0 0 1px 19px;
    border: 1px solid #3a4650;
    background: #758595;
    box-shadow: inset 0 0 0 1px #c5d2de;
    color: #fff;
    font-size: 11px;
}

/* Host taskbar */
.taskbar {
    position: relative;
    display: flex;
    align-items: center;
    height: 48px;
    border-top: 1px solid #0a1c50;
    background: linear-gradient(90deg, #1b3570, #22428c 90px, #24468f 35%, #2c57a8 65%, #2a55a4 calc(100% - 300px), #1d3f7c calc(100% - 280px), #25477f);
    box-shadow: inset 0 1px 0 #8ba3d6;
}
.taskbar .start {
    width: 66px;
    height: 47px;
}
.taskbar .start svg {
    width: 44px;
    height: 44px;
    margin-top: 1px;
}
.launch {
    display: flex;
    align-items: center;
    justify-content: center;
    width: 71px;
    height: 46px;
    padding-left: 4px;
}
.launch svg {
    width: 40px;
    height: 40px;
}
.launch.media svg {
    width: 36px;
    height: 36px;
}
.media {
    width: 66px;
}
.media + .launch {
    width: 77px;
}
.launch.running {
    width: 66px;
    border: 1px solid #93a9d8;
    border-radius: 3px;
    padding: 0 5px 0 0;
    background: linear-gradient(135deg, #8b9fc8, #41609f 50%, #35569b);
    box-shadow: inset -4px 0 0 #35569b, inset -5px 0 0 #93a9d8;
}
.taskbar .tray {
    gap: 10px;
    height: 47px;
    font-size: 14px;
    line-height: 22px;
}
.taskbar .up {
    margin-right: 9px;
}
.taskbar time {
    padding: 0 5px 0 11px;
}
.taskbar .peek {
    border-color: #7c94c0;
    background: linear-gradient(#5f7cae, #203f78 45%, #2a4f93);
}
```
FILE: plots.js
```
let seed = 7;
function rnd() {
    seed = (seed * 1664525 + 1013904223) % 4294967296;
    return seed / 4294967296;
}

function grid(ctx, w, h, stepX, stepY) {
    ctx.fillStyle = '#000';
    ctx.fillRect(0, 0, w, h);
    ctx.fillStyle = '#0a3012';
    for (let i = 0; i * stepX / 10 < w; i++) {
        if (i % 10) ctx.fillRect(Math.round(i * stepX / 10), 0, 1, h);
    }
    for (let i = 0; i * stepY / 5 < h; i++) {
        ctx.fillStyle = i % 5 ? '#0a3012' : '#126018';
        ctx.fillRect(0, Math.round(i * stepY / 5), w, 1);
    }
    ctx.fillStyle = '#126018';
    for (let x = stepX; x < w; x += stepX) ctx.fillRect(Math.round(x), 0, 1, h);
}

// A-scope trace
function drawAscope() {
    const ctx = document.getElementById('ascope').getContext('2d');
    grid(ctx, 314, 104, 52.2, 24.5);
    const knots = [[11, 0], [14, 18], [17, 38], [20, 53], [24, 67], [28, 76], [34, 81], [42, 87], [50, 91], [60, 94], [314, 95]];
    ctx.strokeStyle = '#fff';
    ctx.lineWidth = 1.5;
    ctx.beginPath();
    ctx.moveTo(1, 85);
    ctx.lineTo(1, 0);
    ctx.moveTo(11, 0);
    for (let x = 12; x < 314; x++) {
        const k = knots.findIndex(p => p[0] >= x);
        const a = knots[k - 1], b = knots[k];
        const y = a[1] + (b[1] - a[1]) * (x - a[0]) / (b[0] - a[0]);
        ctx.lineTo(x, y + (rnd() - 0.5) * 7);
    }
    ctx.stroke();
    ctx.fillStyle = '#ffff30';
    ctx.fillRect(118, 0, 1, 104);
}

// Velocity trace: gaps between full-height swings, as [x, depth]
const topGaps = [[56, 39], [57, 39], [60, 39], [61, 39], [62, 36], [65, 34], [66, 34], [69, 47], [71, 47], [72, 47], [75, 44], [82, 42], [84, 42], [88, 30], [95, 41], [97, 54], [99, 39], [105, 54], [106, 54], [123, 49], [127, 30], [132, 49], [134, 17], [136, 54], [139, 41], [145, 30], [150, 24], [154, 22], [157, 29], [161, 51], [165, 47], [166, 47], [181, 32], [184, 40], [185, 40], [191, 47], [193, 55], [207, 45], [208, 45], [218, 42], [230, 47], [237, 5], [244, 47], [248, 51], [262, 39], [268, 49], [288, 49], [292, 49], [293, 49], [303, 40], [308, 52]];
const bottomGaps = [[59, 57], [60, 57], [63, 57], [66, 53], [67, 60], [68, 60], [71, 68], [72, 68], [73, 60], [75, 50], [80, 54], [85, 64], [95, 56], [99, 56], [105, 62], [108, 48], [112, 72], [116, 54], [138, 86], [141, 57], [143, 52], [146, 60], [156, 71], [164, 57], [166, 50], [169, 64], [170, 64], [174, 51], [181, 72], [185, 72], [192, 82], [194, 84], [197, 64], [206, 64], [209, 59], [212, 51], [213, 74], [218, 74], [220, 64], [234, 64], [248, 51], [251, 51], [256, 61], [259, 62], [267, 77], [268, 77], [271, 61], [292, 64], [297, 62], [298, 62], [308, 52]];
function drawVelocity() {
    const ctx = document.getElementById('velocity').getContext('2d');
    grid(ctx, 309, 104, 51.3, 25.6);
    ctx.fillStyle = '#fff';
    ctx.fillRect(0, 50, 1, 12);
    ctx.fillRect(2, 48, 1, 56);
    for (let x = 1; x < 60; x++) {
        const dip = x > 3 && x < 14 ? 7 * Math.sin((x - 3) / 11 * Math.PI) : 0;
        const y = 51 - Math.min(x, 40) / 10 + dip;
        const amp = x > 45 ? 6 : 2;
        ctx.fillRect(x, y - rnd() * amp, 1, 2 + rnd() * amp * 1.5);
    }
    ctx.fillRect(55, 0, 254, 104);
    topGaps.forEach(([x, d], i) => {
        ctx.fillStyle = i % 7 === 6 ? '#0c3f14' : '#000';
        ctx.fillRect(x, 0, 1, d);
    });
    bottomGaps.forEach(([x, d], i) => {
        ctx.fillStyle = i % 7 === 5 ? '#0c3f14' : '#000';
        ctx.fillRect(x, d, 1, 104 - d);
    });
}

// Colour scale shared by both maps, t from 0 (low) to 1 (high)
const stops = [[0, 220, 220, 220], [0.12, 48, 48, 255], [0.32, 26, 148, 120], [0.48, 0, 255, 0], [0.59, 255, 255, 40], [0.70, 255, 190, 0], [0.77, 255, 0, 0], [1, 152, 0, 160]];
function colour(t) {
    t = Math.max(0, Math.min(1, t));
    let k = 1;
    while (stops[k][0] < t) k++;
    const a = stops[k - 1], b = stops[k];
    const f = (t - a[0]) / (b[0] - a[0]);
    return [a[1] + (b[1] - a[1]) * f, a[2] + (b[2] - a[2]) * f, a[3] + (b[3] - a[3]) * f];
}

function interp(table, v) {
    for (let k = 1; k < table.length; k++) {
        if (v <= table[k][0]) {
            const a = table[k - 1], b = table[k];
            return a[1] + (b[1] - a[1]) * (v - a[0]) / (b[0] - a[0]);
        }
    }
    return table[table.length - 1][1];
}

function paint(id, pick) {
    const canvas = document.getElementById(id);
    const ctx = canvas.getContext('2d');
    const w = canvas.width, h = canvas.height;
    const img = ctx.createImageData(w, h);
    for (let y = 0; y < h; y++) {
        for (let x = 0; x < w; x++) {
            const c = pick(x, y, (h - y) / h * 5000);
            const i = (y * w + x) * 4;
            img.data[i] = c[0];
            img.data[i + 1] = c[1];
            img.data[i + 2] = c[2];
            img.data[i + 3] = 255;
        }
    }
    ctx.putImageData(img, 0, 0);
}

const black = [0, 0, 0];

function drawBackscatter() {
    const level = [[0, 0.655], [380, 0.65], [470, 0.61], [560, 0.59], [650, 0.565], [900, 0.54], [1100, 0.515], [1500, 0.495], [2100, 0.48], [3000, 0.485], [4000, 0.515], [5000, 0.55]];
    const noise = [[0, 0.004], [1500, 0.012], [2500, 0.02], [3500, 0.06], [5000, 0.1]];
    const drop = [[0, 0], [1900, 0], [2400, 0.007], [2600, 0.025], [3000, 0.05], [3500, 0.1], [4200, 0.11], [4600, 0.15], [5000, 0.23]];
    const held = [];
    paint('backscatter', (x, y, r) => {
        if (y > 264) return rnd() < 0.5 ? black : [60, 230, 20];
        if (held[x] > 0) {
            held[x]--;
            return black;
        }
        let p = interp(drop, r);
        if (y === 39 || y === 40) p = 0.45;
        if ((y === 65 || y === 75 || y === 81) && r > 3000) p = 0.25;
        if (y === 131) p = 0.12;
        if (rnd() < p * 0.75) {
            held[x] = rnd() < 0.6 ? 1 : 0;
            return black;
        }
        return colour(Math.max(0.465, interp(level, r) + (rnd() - 0.5) * interp(noise, r)));
    });
}

// Smooth value noise, stretched along the time axis
const lattice = [];
for (let i = 0; i < 4096; i++) lattice.push(rnd());
function smooth(x, y) {
    const xi = Math.floor(x), yi = Math.floor(y);
    let fx = x - xi, fy = y - yi;
    fx = fx * fx * (3 - 2 * fx);
    fy = fy * fy * (3 - 2 * fy);
    const at = (a, b) => lattice[(a * 57 + b * 131) & 4095];
    const top = at(xi, yi) * (1 - fx) + at(xi + 1, yi) * fx;
    const low = at(xi, yi + 1) * (1 - fx) + at(xi + 1, yi + 1) * fx;
    return top * (1 - fy) + low * fy;
}

function blob(x, y, cx, cy, rx, ry) {
    const d = ((x - cx) / rx) ** 2 + ((y - cy) / ry) ** 2;
    return Math.exp(-d);
}

function drawDoppler() {
    const bias = [], reach = [], last = [];
    for (let x = 0; x < 476; x++) {
        // neighbouring rays often behave alike
        bias.push(x && rnd() < 0.4 ? bias[x - 1] : rnd());
        reach.push((rnd() - 0.5) * 800);
    }
    paint('doppler', (x, y, r) => {
        if (y > 264) return rnd() < 0.5 ? black : [40, 200, 20];
        const chaos = interp([[0, 0], [2000, 0], [2300, 0.1], [2600, 0.3], [3000, 0.6], [3300, 0.97], [5000, 1]], r > 1900 ? r + reach[x] : r);
        const b = bias[x];
        if (rnd() < chaos * 1.05) {
            if (last[x] && rnd() < 0.35) return last[x];
            const k = rnd();
            const gap = r > 3000 ? 0.15 : 0.05;
            const strong = b < 0.2 ? 0.12 : b < 0.45 ? 0.42 : 0.78;
            let c;
            if (k < gap) c = black;
            else if (k < gap + strong) c = [255, 0, 255];
            else if (rnd() < 0.12) c = [200, 180, 150];
            else c = b < 0.12 ? colour(0.3 + rnd() * 0.35) : colour(0.3 + rnd() * 0.7);
            last[x] = c;
            return c;
        }
        const spread = interp([[0, 0.005], [900, 0.015], [1500, 0.04], [2000, 0.1], [2600, 0.2], [5000, 0.3]], r);
        let t = 0.545 + (b - 0.5) * interp([[0, 0], [900, 0.005], [1600, 0.035], [5000, 0.08]], r) + (rnd() - 0.5) * spread;
        t += 0.035 * blob(x, y, 420, 190, 130, 14);
        t -= 0.03 * blob(x, y, 420, 210, 100, 9);
        if (y > 212) {
            const f = Math.min(1, (y - 212) / 12);
            t += f * ((smooth(x / 26, y / 5) - 0.5) * 0.11 + (smooth(x / 9 + 9, y / 3 + 5) - 0.5) * 0.06 - 0.015);
            t -= 0.1 * blob(x, y, 150, 232, 95, 10);
            t -= 0.08 * blob(x, y, 225, 236, 60, 10);
            t -= 0.1 * blob(x, y, 30, 257, 70, 9);
            t -= 0.04 * blob(x, y, 300, 257, 60, 8);
            t += 0.09 * blob(x, y, 130, 253, 70, 5);
            t += 0.07 * blob(x, y, 20, 233, 30, 10);
            t += 0.06 * blob(x, y, 415, 235, 50, 12);
            t += 0.06 * blob(x, y, 400, 258, 40, 7);
            t -= 0.08 * blob(x, y, 476, 248, 18, 10);
            t = Math.max(0.38, Math.min(0.68, t));
        }
        return colour(t);
    });
}

drawAscope();
drawVelocity();
drawBackscatter();
drawDoppler();
```
